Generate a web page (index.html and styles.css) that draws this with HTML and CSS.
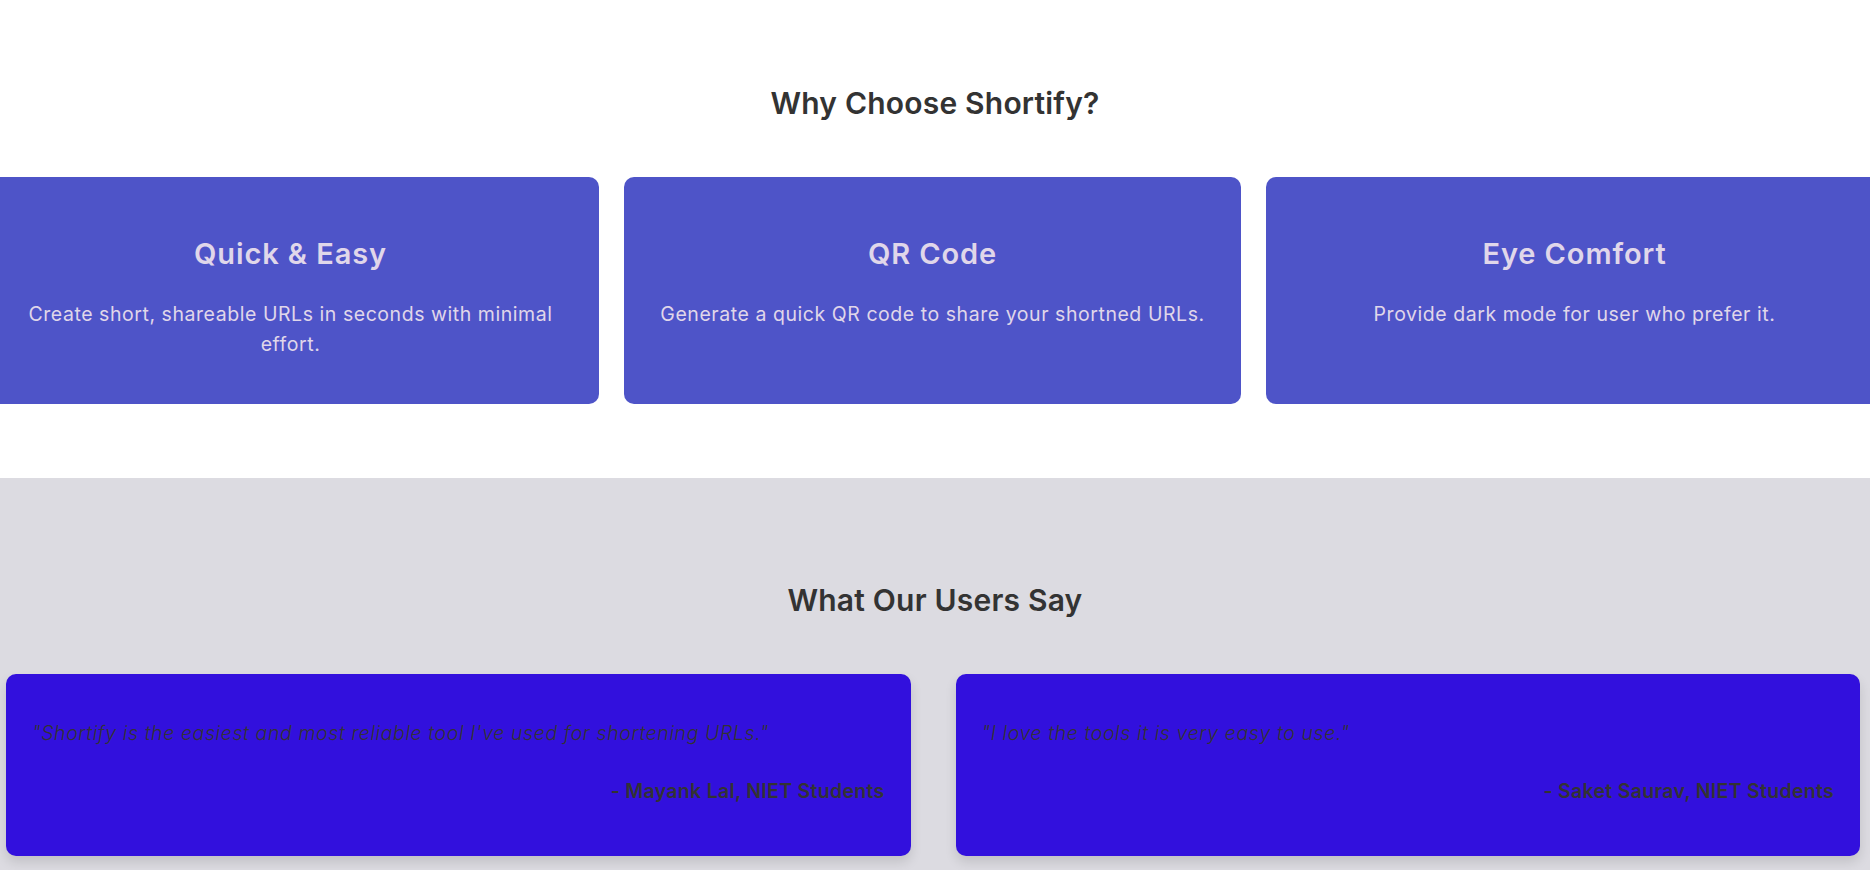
FILE: index.html
```html
<!DOCTYPE html>
<html lang="en">
<head>
<meta charset="UTF-8">
<title>Shortify</title>
<link rel="stylesheet" href="styles.css">
</head>
<body>
<section class="features">
  <h2 class="section-title">Why Choose Shortify?</h2>
  <div class="feature-row">
    <div class="feature-card">
      <h3 class="feature-title">Quick &amp; Easy</h3>
      <p class="feature-text">Create short, shareable URLs in seconds with minimal effort.</p>
    </div>
    <div class="feature-card">
      <h3 class="feature-title">QR Code</h3>
      <p class="feature-text">Generate a quick QR code to share your shortned URLs.</p>
    </div>
    <div class="feature-card">
      <h3 class="feature-title">Eye Comfort</h3>
      <p class="feature-text">Provide dark mode for user who prefer it.</p>
    </div>
  </div>
</section>
<section class="testimonials">
  <h2 class="section-title">What Our Users Say</h2>
  <div class="testimonial-row">
    <div class="testimonial-card">
      <p class="quote">"Shortify is the easiest and most reliable tool I've used for shortening URLs."</p>
      <p class="author">- Mayank Lal, NIET Students</p>
    </div>
    <div class="testimonial-card">
      <p class="quote">"I love the tools it is very easy to use."</p>
      <p class="author">- Saket Saurav, NIET Students</p>
    </div>
  </div>
</section>
</body>
</html>
```

FILE: styles.css
```css
* { box-sizing: border-box; }

html, body {
  margin: 0;
  padding: 0;
  overflow: hidden;
}

body {
  font-family: "Inter", "Open Sans", sans-serif;
  background: #ffffff;
  color: #333333;
  width: 1870px;
  min-height: 870px;
  display: flex;
  flex-direction: column;
}

.section-title {
  margin: 0;
  font-size: 30px;
  font-weight: 600;
  letter-spacing: 0.2px;
  line-height: 38px;
  text-align: center;
  color: #333333;
}

.features {
  padding-top: 84px;
  padding-bottom: 74px;
  overflow: hidden;
}

.feature-row {
  display: flex;
  justify-content: center;
  gap: 25px;
  margin-top: 55px;
  padding-right: 5px;
}

.feature-card {
  flex: 0 0 617px;
  background: #4e54c8;
  border-radius: 10px;
  padding: 40px 25px 45px;
  text-align: center;
  color: #e0d7ea;
}

.feature-title {
  margin: 20px 0 28px;
  font-size: 29px;
  font-weight: 600;
  letter-spacing: 0.9px;
  line-height: 34px;
}

.feature-text {
  margin: 0;
  font-size: 19.5px;
  letter-spacing: 0.55px;
  line-height: 30px;
}

.testimonials {
  flex: 1 0 auto;
  background: #dcdbe1;
  padding-top: 103px;
}

.testimonial-row {
  display: flex;
  gap: 45px;
  padding: 0 10px 0 6px;
  margin-top: 55px;
}

.testimonial-card {
  flex: 1 1 0;
  background: #3210dd;
  border-radius: 10px;
  padding: 44px 26px 26px;
  box-shadow: 0 6px 12px rgba(0, 0, 0, 0.12);
}

.quote {
  margin: 0;
  font-size: 19.5px;
  font-style: italic;
  font-weight: 300;
  letter-spacing: 0.6px;
  line-height: 30px;
  color: #333333;
}

.author {
  margin: 28px 0 24px;
  font-size: 19.5px;
  font-weight: 600;
  letter-spacing: 0.3px;
  line-height: 30px;
  text-align: right;
  color: #333333;
}
```
